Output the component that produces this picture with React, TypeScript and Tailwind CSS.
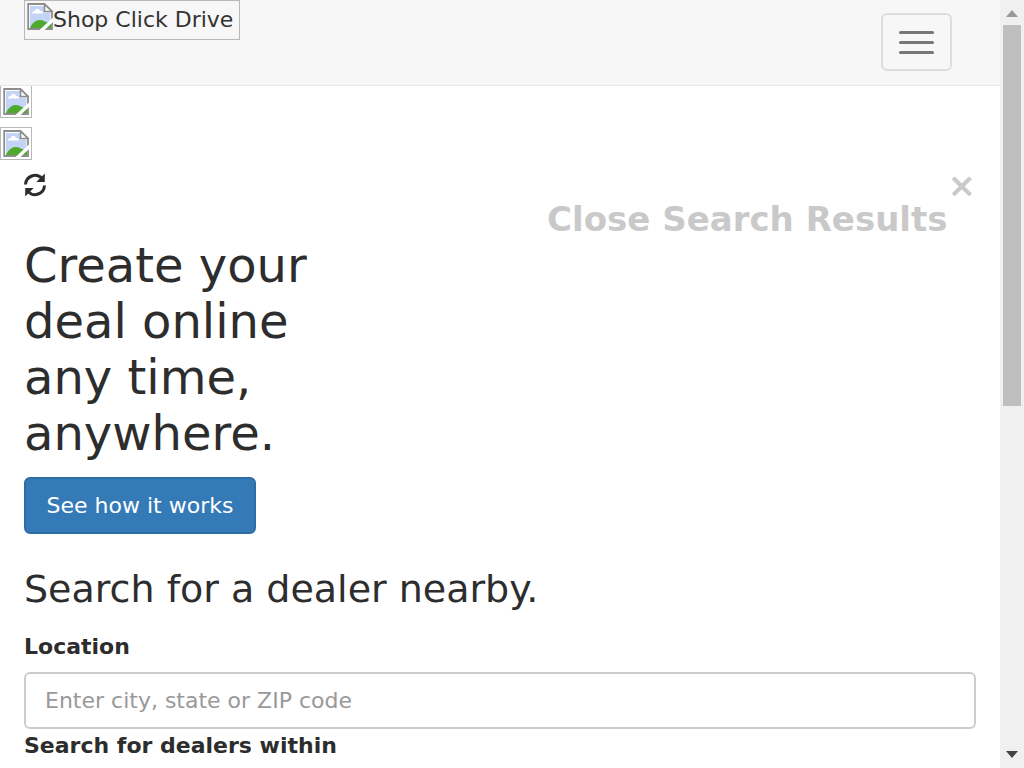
import React from "react";

function PictureIcon() {
  return (
    <svg viewBox="0 0 26 27" className="h-[27px] w-[26px] shrink-0" aria-hidden="true">
      <path d="M1 1H18L25 8V26H1Z" fill="#fff" />
      <path d="M3 3H17V9.500H23.500V24.500H3Z" fill="#c3d4f6" />
      <path d="M5 10.500c0-2 2-2.500 3-2.500 0-3 4-3 5 0 2-.5 3 1 3 2.500Z" fill="#fff" />
      <path d="M3 25C5 20 9 17 12.500 17C16 17 19 19 21 20L24.500 20V25Z" fill="#4fa92e" />
      <path d="M25 8.500L17.500 1H1.200V26H25Z" fill="none" stroke="#8d8d8d" strokeWidth="1.800" />
      <path d="M17.500 1.500V8.500H25Z" fill="#fff" stroke="#8d8d8d" strokeWidth="1.600" />
      <path d="M26 14.500L12.500 27H17.500L26 19Z" fill="#fff" />
    </svg>
  );
}

function RefreshIcon() {
  return (
    <svg viewBox="0 0 22 24" className="h-6 w-[22px]" aria-hidden="true">
      <path d="M1.500 11.500A9.500 9.500 0 0 1 18 5.500M20.500 12.500A9.500 9.500 0 0 1 4 18.500" fill="none" stroke="#2d2d2d" strokeWidth="3" />
      <path d="M20.800 .5V9H12.300ZM1.200 23.500V15H9.700Z" fill="#2d2d2d" />
    </svg>
  );
}

function Scrollbar() {
  return (
    <div className="flex w-6 shrink-0 flex-col items-center justify-between bg-[#f0f0f0]" aria-hidden="true">
      <div className="flex w-full flex-col items-center">
        <svg viewBox="0 0 24 25" className="h-[25px] w-6"><path d="M6 17L12 10L18 17Z" fill="#999" /></svg>
        <div className="h-[381px] w-[18px] bg-[#bfbfbf]" />
      </div>
      <svg viewBox="0 0 24 25" className="h-[25px] w-6"><path d="M6 8L12 15L18 8Z" fill="#444" /></svg>
    </div>
  );
}

export default function App() {
  return (
    <div className="flex min-h-screen bg-white font-['DejaVu_Sans',sans-serif] text-[22px] leading-[34px] text-[#2d2d2d]">
      <div className="min-w-0 flex-1">
        <header className="flex h-[86px] items-start justify-between border-b border-[#e7e7e7] bg-[#f7f7f7] pr-12 pl-6">
          <a href="#" className="flex h-10 items-start border border-[#b8b8b8] pt-[2px] pr-[6px] pl-[2px] text-[#333]">
            <PictureIcon />
            <span>Shop Click Drive</span>
          </a>
          <button type="button" aria-label="Toggle navigation" className="mt-[13px] flex h-[58px] w-[71px] flex-col items-center justify-center gap-[7px] rounded-md border-2 border-[#ddd]">
            <span className="h-[3px] w-[35px] rounded-xs bg-[#777]" />
            <span className="h-[3px] w-[35px] rounded-xs bg-[#777]" />
            <span className="h-[3px] w-[35px] rounded-xs bg-[#777]" />
          </button>
        </header>
        <div className="flex flex-col gap-[9px]">
          <div className="flex h-8 w-8 items-center justify-center border border-t-0 border-[#b8b8b8]">
            <PictureIcon />
          </div>
          <div className="flex h-[33px] w-8 items-center justify-center border border-[#b8b8b8]">
            <PictureIcon />
          </div>
        </div>
        <main className="px-6">
          <div className="flex h-[77px] items-start justify-between pt-[13px]">
            <RefreshIcon />
            <button type="button" className="flex items-start text-[34px] leading-[36px] font-bold text-[#c9c9c9]">
              <span className="pt-7">Close Search Results</span>
              <span className="leading-6">×</span>
            </button>
          </div>
          <h1 className="w-[317px] text-[48px] leading-[56px]">Create your deal online any time, anywhere.</h1>
          <button type="button" className="mt-4 h-[57px] min-w-[232px] rounded-md border-2 border-[#2e6da4] bg-[#337ab7] px-[19px] text-white">See how it works</button>
          <h2 className="mt-8 text-[38px] leading-[46px]">Search for a dealer nearby.</h2>
          <label htmlFor="location" className="mt-[18px] block font-bold">Location</label>
          <input id="location" type="text" placeholder="Enter city, state or ZIP code" className="mt-2 block h-[57px] w-full rounded-md border-2 border-[#ccc] bg-white px-[19px] placeholder:text-[#999]" />
          <p className="font-bold">Search for dealers within</p>
        </main>
      </div>
      <Scrollbar />
    </div>
  );
}
